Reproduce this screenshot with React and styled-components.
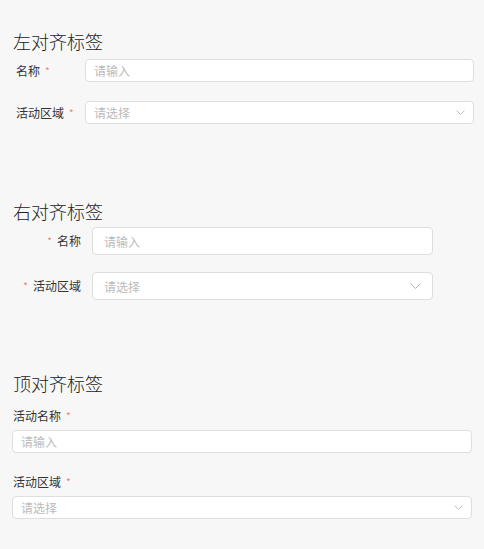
import React from 'react';
import styled, { createGlobalStyle } from 'styled-components';

const GlobalStyle = createGlobalStyle`
  html, body {
    margin: 0;
    padding: 0;
    background: #f7f7f7;
  }
  body {
    font-family: "Noto Sans CJK SC", "Noto Sans", sans-serif;
    color: #333;
  }
`;

const Page = styled.main`
  display: flex;
  flex-direction: column;
  padding: 29px 10px 30px 13px;
`;

const Section = styled.section`
  display: flex;
  flex-direction: column;
  margin-top: ${(p) => p.$top || 0}px;
`;

const Title = styled.h2`
  margin: 0;
  font-size: 18px;
  line-height: 24px;
  font-weight: 300;
  color: #222;
`;

const Form = styled.form`
  display: flex;
  flex-direction: column;
  gap: ${(p) => p.$gap}px;
  margin-top: ${(p) => p.$top}px;
  margin-left: ${(p) => p.$shift || 0}px;
`;

const Row = styled.div`
  display: flex;
  flex-direction: ${(p) => (p.$top ? 'column' : 'row')};
  align-items: ${(p) => (p.$top ? 'stretch' : 'center')};
  gap: ${(p) => (p.$top ? 5 : 0)}px;
`;

const Label = styled.label`
  display: flex;
  align-items: center;
  justify-content: ${(p) => (p.$right ? 'flex-end' : 'flex-start')};
  flex: none;
  width: ${(p) => p.$width || 'auto'};
  padding-left: ${(p) => p.$pad || 0}px;
  padding-right: ${(p) => (p.$right ? 11 : 0)}px;
  box-sizing: border-box;
  font-size: 12px;
  line-height: 18px;
  color: #333;
  gap: 5px;
`;

const Star = styled.span`
  color: #f08080;
  font-size: 10px;
`;

const Field = styled.div`
  display: flex;
  align-items: center;
  justify-content: space-between;
  box-sizing: border-box;
  width: ${(p) => p.$width}px;
  height: ${(p) => p.$height}px;
  padding: 0 ${(p) => p.$pad}px;
  background: #fff;
  border: 1px solid #dedede;
  border-radius: 4px;
  font-size: 12px;
  color: #bbb;
`;

const Chevron = ({ size = 9 }) => (
  <svg width={size} height={size * 0.6} viewBox="0 0 10 6" fill="none">
    <path d="M0.6 0.6 L5 5 L9.4 0.6" stroke="#b0b0b0" strokeWidth="0.9" />
  </svg>
);

const Input = (p) => (
  <Field $width={p.w} $height={p.h} $pad={p.pad}>
    <span>请输入</span>
  </Field>
);

const Select = (p) => (
  <Field $width={p.w} $height={p.h} $pad={p.pad}>
    <span>请选择</span>
    <Chevron size={p.cs} />
  </Field>
);

export default function App() {
  return (
    <>
      <GlobalStyle />
      <Page>
        <Section>
          <Title>左对齐标签</Title>
          <Form $gap={19} $top={6}>
            <Row>
              <Label $width="72px" $pad={3}>
                名称 <Star>*</Star>
              </Label>
              <Input w={389} h={23} pad={8} />
            </Row>
            <Row>
              <Label $width="72px" $pad={3}>
                活动区域 <Star>*</Star>
              </Label>
              <Select w={389} h={23} pad={8} cs={9} />
            </Row>
          </Form>
        </Section>

        <Section $top={75}>
          <Title>右对齐标签</Title>
          <Form $gap={17} $top={4}>
            <Row>
              <Label $width="79px" $right>
                <Star>*</Star>名称
              </Label>
              <Input w={341} h={28} pad={11} />
            </Row>
            <Row>
              <Label $width="79px" $right>
                <Star>*</Star>活动区域
              </Label>
              <Select w={341} h={28} pad={11} cs={11} />
            </Row>
          </Form>
        </Section>

        <Section $top={71}>
          <Title>顶对齐标签</Title>
          <Form $gap={20} $top={12} $shift={-1}>
            <Row $top>
              <Label $pad={1}>
                活动名称 <Star>*</Star>
              </Label>
              <Input w={460} h={23} pad={8} />
            </Row>
            <Row $top>
              <Label $pad={1}>
                活动区域 <Star>*</Star>
              </Label>
              <Select w={460} h={23} pad={8} cs={9} />
            </Row>
          </Form>
        </Section>
      </Page>
    </>
  );
}
